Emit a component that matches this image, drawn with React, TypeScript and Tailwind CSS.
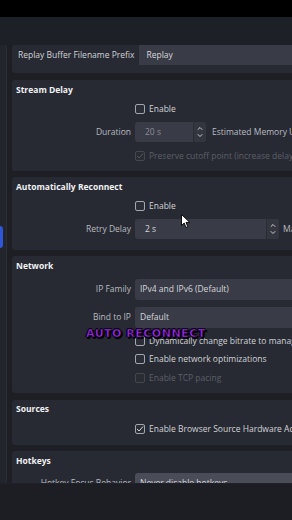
import type { ReactNode } from 'react';

const font = "font-['Open_Sans','Noto_Sans',sans-serif]";

function Check({ checked = false, disabled = false }: { checked?: boolean; disabled?: boolean }) {
  return (
    <div
      className={`w-[10px] h-[10px] shrink-0 rounded-[2px] border flex items-center justify-center ${
        disabled ? 'border-[#45474f] bg-[#2a2c34]' : 'border-[#a4a6ad] bg-[#2c2e37]'
      }`}
    >
      {checked && (
        <svg width="8" height="8" viewBox="0 0 8 8" fill="none">
          <path
            d="M1.3 4.2 L3.1 6 L6.8 1.8"
            stroke={disabled ? '#55575f' : '#d6d7db'}
            strokeWidth="1"
            strokeLinecap="round"
            strokeLinejoin="round"
          />
        </svg>
      )}
    </div>
  );
}

function CheckRow({
  label,
  checked,
  disabled,
  className = '',
}: {
  label: string;
  checked?: boolean;
  disabled?: boolean;
  className?: string;
}) {
  return (
    <div className={`flex items-center h-[14px] pl-[123px] ${className}`}>
      <Check checked={checked} disabled={disabled} />
      <span className={`ml-[4px] whitespace-nowrap ${disabled ? 'text-[#5d5f67]' : 'text-[#d2d3d7]'}`}>{label}</span>
    </div>
  );
}

function Field({ label, children, className = '' }: { label: string; children: ReactNode; className?: string }) {
  return (
    <div className={`flex items-center ${className}`}>
      <div className="w-[119px] shrink-0 text-right text-[#b9bac0] whitespace-nowrap">{label}</div>
      <div className="ml-[4px] flex items-center">{children}</div>
    </div>
  );
}

function Chevrons() {
  return (
    <svg width="6" height="14" viewBox="0 0 6 14" fill="none">
      <path d="M1 4.5 L3 2.5 L5 4.5" stroke="#c9cad0" strokeWidth="1" strokeLinecap="round" strokeLinejoin="round" />
      <path d="M1 9.5 L3 11.5 L5 9.5" stroke="#c9cad0" strokeWidth="1" strokeLinecap="round" strokeLinejoin="round" />
    </svg>
  );
}

function Spin({ value, width, disabled }: { value: string; width: string; disabled?: boolean }) {
  return (
    <div className={`flex h-[20px] rounded-[3px] bg-[#393b47] overflow-hidden ${width}`}>
      <div className={`flex-1 flex items-center pl-[10px] ${disabled ? 'text-[#8d8e95]' : 'text-[#d6d7db]'}`}>{value}</div>
      <div className="w-[13px] flex items-center justify-center bg-[#33353f] border-l border-[#2a2c35]">
        <Chevrons />
      </div>
    </div>
  );
}

function Section({ title, children, className = '' }: { title: string; children: ReactNode; className?: string }) {
  return (
    <div className={`shrink-0 bg-[#272a33] rounded-l-[3px] ${className}`}>
      <div className="h-[12px] flex items-center pl-[4px] font-bold text-[#f1f1f3] whitespace-nowrap">{title}</div>
      {children}
    </div>
  );
}

export default function App() {
  return (
    <div className={`relative w-[292px] h-[520px] overflow-hidden bg-[#1d1f25] text-[8.5px] leading-none ${font}`}>
      <div className="h-[17px] bg-black" />
      <div className="h-[28px] bg-[#1e2027]" />

      <div className="flex h-[438px] overflow-hidden">
        {/* left dock strip */}
        <div className="w-[7px] shrink-0 bg-[#23252c] border-r border-[#2d2f37] rounded-r-[2px] flex flex-col">
          <div className="mt-[181px] w-[3px] h-[22px] bg-[#2f55d9] rounded-r-[3px]" />
        </div>

        <div className="ml-[5px] w-[300px] shrink-0 flex flex-col">
          {/* Replay Buffer tail */}
          <div className="shrink-0 h-[28px] bg-[#272a33] rounded-l-[3px] flex pl-[6px]">
            <div className="h-[20px] flex items-center text-[#d2d3d7] whitespace-nowrap">Replay Buffer Filename Prefix</div>
            <div className="ml-[4px] flex-1 h-[20px] bg-[#393b47] flex items-center pl-[8px] text-[#d6d7db]">Replay</div>
          </div>

          {/* Stream Delay */}
          <Section title="Stream Delay" className="mt-[7px] h-[91px] pt-[4px]">
            <CheckRow label="Enable" className="mt-[6px]" />
            <Field label="Duration" className="mt-[6px]">
              <Spin value="20 s" width="w-[71px]" disabled />
              <span className="ml-[6px] text-[#b9bac0] whitespace-nowrap">Estimated Memory Usage: 0 MB</span>
            </Field>
            <CheckRow label="Preserve cutoff point (increase delay) when reconnecting" checked disabled className="mt-[7px]" />
          </Section>

          {/* Automatically Reconnect */}
          <Section title="Automatically Reconnect" className="mt-[6px] h-[73px] pt-[4px]">
            <CheckRow label="Enable" className="mt-[6px]" />
            <Field label="Retry Delay" className="mt-[6px]">
              <Spin value="2 s" width="w-[144px]" />
              <span className="ml-[4px] text-[#b9bac0] whitespace-nowrap">Maximum Retries</span>
            </Field>
          </Section>

          {/* Network */}
          <Section title="Network" className="mt-[6px] h-[137px] pt-[4px]">
            <Field label="IP Family" className="mt-[7px]">
              <div className="w-[170px] h-[21px] rounded-l-[3px] bg-[#393b47] flex items-center pl-[5px] text-[#d6d7db] whitespace-nowrap">
                IPv4 and IPv6 (Default)
              </div>
            </Field>
            <Field label="Bind to IP" className="mt-[7px]">
              <div className="w-[170px] h-[21px] rounded-l-[3px] bg-[#393b47] flex items-center pl-[5px] text-[#d6d7db]">Default</div>
            </Field>
            <CheckRow label="Dynamically change bitrate to manage congestion" className="mt-[6px]" />
            <CheckRow label="Enable network optimizations" className="mt-[4px]" />
            <CheckRow label="Enable TCP pacing" disabled className="mt-[5px]" />
          </Section>

          {/* Sources */}
          <Section title="Sources" className="mt-[7px] h-[45px] pt-[3px]">
            <CheckRow label="Enable Browser Source Hardware Acceleration" checked className="mt-[7px]" />
          </Section>

          {/* Hotkeys */}
          <Section title="Hotkeys" className="mt-[6px] h-[60px] pt-[4px]">
            <Field label="Hotkey Focus Behavior" className="mt-[6px]">
              <div className="w-[170px] h-[21px] rounded-l-[3px] bg-[#4a4c58] flex items-center pl-[5px] text-[#d6d7db] whitespace-nowrap">
                Never disable hotkeys
              </div>
            </Field>
          </Section>
        </div>
      </div>

      <div className="h-[37px] bg-[#1c1e23] border-t border-[#202229]" />

      {/* video caption overlay */}
      <div className="absolute left-[86px] top-[328px] text-[11px] font-black tracking-[0.5px] text-[#a12cf2] whitespace-nowrap font-['DejaVu_Sans',sans-serif] [-webkit-text-stroke:0.6px_#14001f] [text-shadow:1px_1px_0_#000,2px_1px_0_#000,1px_2px_0_#000,-1px_0_0_#000,0_-1px_0_#000]">
        AUTO RECONNECT
      </div>

      {/* mouse cursor */}
      <svg className="absolute left-[181px] top-[214px]" width="10" height="15" viewBox="0 0 10 15">
        <path d="M0.5 0.5 L0.5 11.5 L3.2 9 L5 13.5 L6.8 12.7 L5 8.4 L8.8 8.4 Z" fill="#ffffff" stroke="#000000" strokeWidth="0.9" strokeLinejoin="round" />
      </svg>
    </div>
  );
}
